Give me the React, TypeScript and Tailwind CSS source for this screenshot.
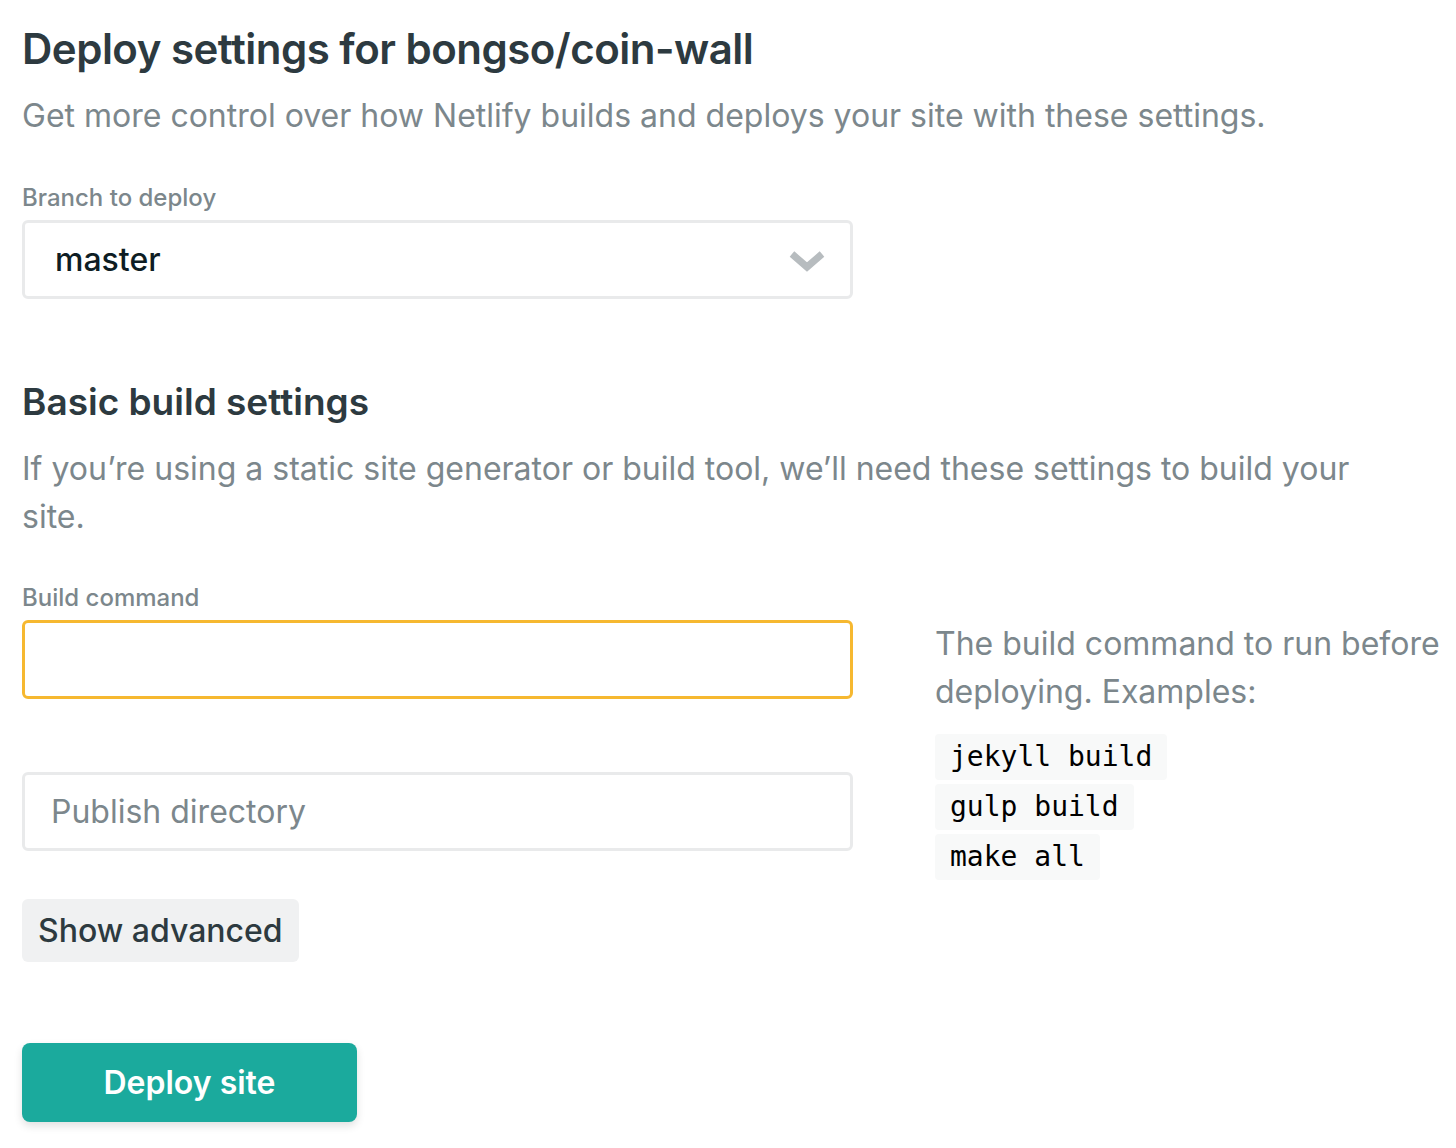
import React from "react";

const font = { fontFamily: "Inter, 'Noto Sans', sans-serif" };

export default function App() {
  return (
    <div className="min-h-[1148px] bg-white pl-[22px] pt-[22px]" style={font}>
      <h1 className="text-[42px] leading-[54px] font-semibold tracking-[-0.5px] text-[#2d3a40]">
        Deploy settings for bongso/coin-wall
      </h1>
      <p className="mt-[20px] text-[32px] leading-[40px] text-[#7c878c]">
        Get more control over how Netlify builds and deploys your site with these settings.
      </p>

      <div className="mt-[48px] w-[831px]">
        <div className="text-[24px] leading-[28px] font-medium text-[#7c878c]">Branch to deploy</div>
        <div className="mt-[8px] flex h-[79px] items-center justify-between rounded-[6px] border-[3px] border-[#e9eaeb] pl-[30px] pr-[24px]">
          <span className="text-[32px] text-[#0e1d24] font-medium">master</span>
          <svg width="38" height="24" viewBox="0 0 38 24">
            <path d="M4 6 L19 19 L34 6" fill="none" stroke="#b7bcbf" strokeWidth="7" strokeLinejoin="miter" />
          </svg>
        </div>
      </div>

      <h2 className="mt-[80px] text-[37px] leading-[46px] font-semibold text-[#2d3a40]">Basic build settings</h2>
      <p className="mt-[20px] w-[1380px] text-[32px] leading-[48px] text-[#7c878c]">
        If you’re using a static site generator or build tool, we’ll need these settings to build your site.
      </p>

      <div className="mt-[43px] flex">
        <div className="w-[831px] shrink-0">
          <div className="text-[24px] leading-[28px] font-medium text-[#7c878c]">Build command</div>
          <div className="mt-[8px] h-[79px] rounded-[6px] border-[3px] border-[#f6b830] bg-white"></div>
          <div className="mt-[73px] flex h-[79px] items-center rounded-[6px] border-[3px] border-[#e9eaeb] pl-[26px]">
            <span className="text-[32px] text-[#7c878c]">Publish directory</span>
          </div>
          <button className="mt-[48px] flex h-[63px] items-center rounded-[6px] bg-[#f0f1f2] px-[16px] text-[32px] font-medium text-[#2d3a40]">
            Show advanced
          </button>
        </div>
        <div className="ml-[82px] pt-[36px]">
          <p className="text-[32px] leading-[48px] text-[#7c878c] whitespace-nowrap">The build command to run before</p>
          <p className="text-[32px] leading-[48px] text-[#7c878c]">deploying. Examples:</p>
          <div className="mt-[18px] flex flex-col items-start gap-[4px]">
            {["jekyll build", "gulp build", "make all"].map((c) => (
              <code key={c} className="rounded-[4px] bg-[#f8f9f9] px-[15px] text-[28px] leading-[46px] text-black" style={{ fontFamily: "'DejaVu Sans Mono', monospace" }}>
                {c}
              </code>
            ))}
          </div>
        </div>
      </div>

      <button className="mt-[81px] flex h-[79px] w-[335px] items-center justify-center rounded-[8px] bg-[#1baa9d] text-[32px] font-semibold text-white shadow-[0_4px_8px_rgba(0,0,0,0.12)]">
        Deploy site
      </button>
    </div>
  );
}
